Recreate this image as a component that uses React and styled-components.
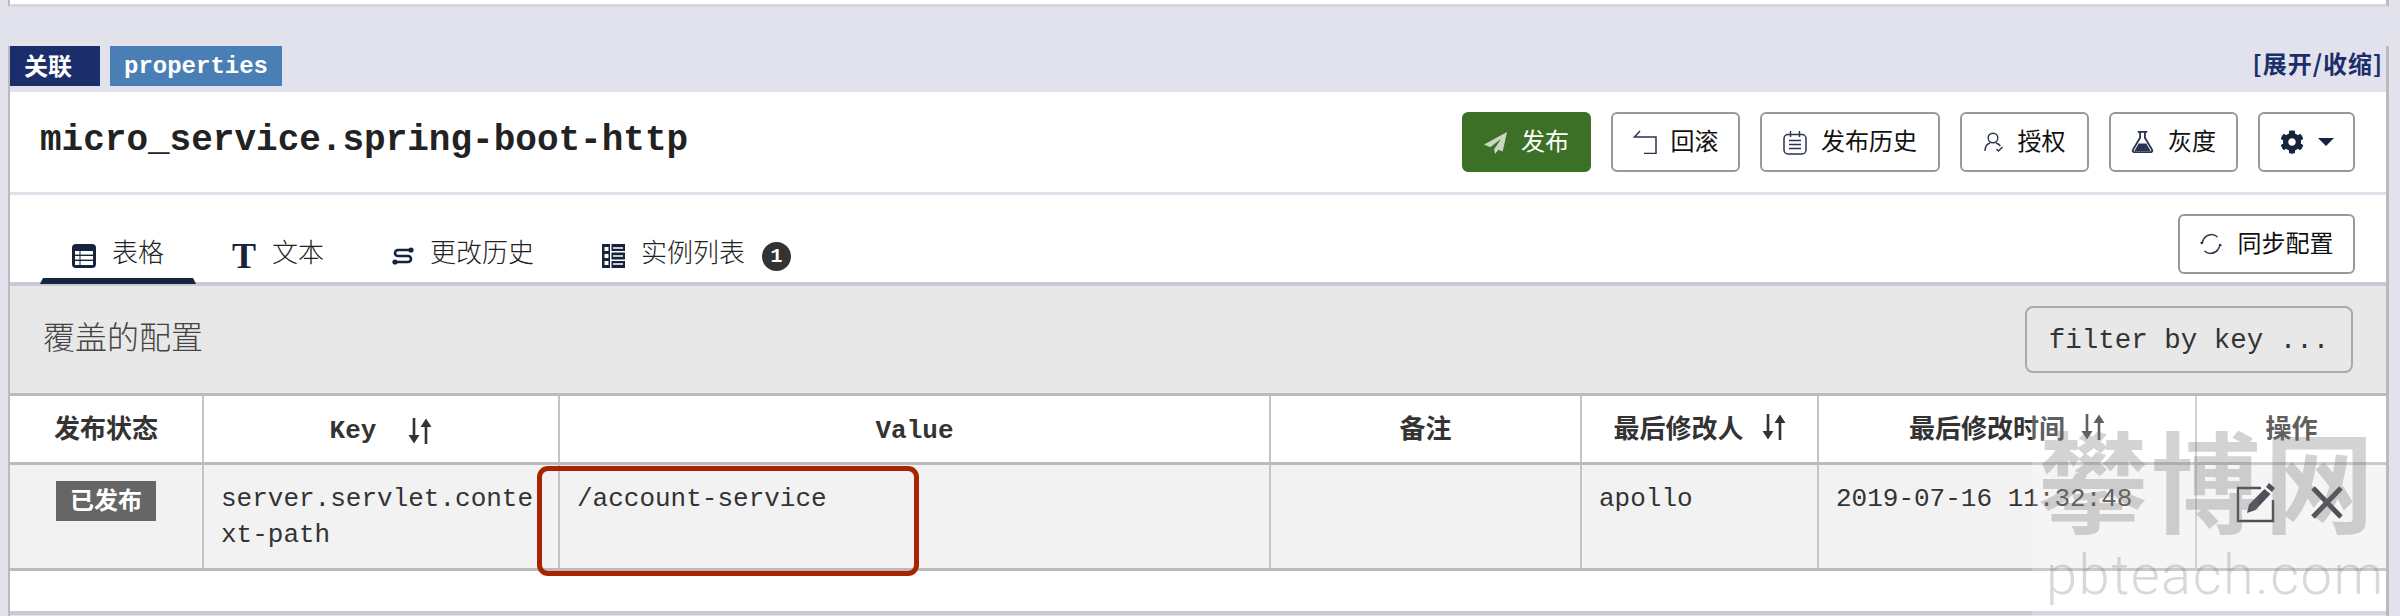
import React from "react";
import styled, { createGlobalStyle } from "styled-components";
import { FaCog } from "react-icons/fa";

const CJK = `"Noto Sans CJK SC", "Liberation Sans", sans-serif`;
const MONO = `"Liberation Mono", "Noto Sans CJK SC", monospace`;
const DARK = "#15233c";
const LINE = "#2a3350";

const GlobalStyle = createGlobalStyle`
  html, body {
    margin: 0;
    padding: 0;
    height: 616px;
    overflow: hidden;
    background: #e1e2ec;
    font-family: ${CJK};
  }
  * { box-sizing: border-box; }
`;

const TableIcon = () => (
  <svg width="24" height="24" viewBox="0 0 24 24">
    <rect width="24" height="24" rx="4" fill={DARK} />
    <rect x="3" y="7" width="18" height="3.6" fill="#fff" />
    <rect x="3" y="12" width="18" height="3.6" fill="#fff" />
    <rect x="3" y="17" width="18" height="4" fill="#fff" />
    <rect x="7.5" y="7" width="1" height="14" fill={DARK} />
  </svg>
);

const HistoryIcon = () => (
  <svg width="22" height="18" viewBox="0 0 22 18">
    <path d="M19 3H6a3 3 0 0 0 0 6h10a3 3 0 0 1 0 6H3" fill="none" stroke={DARK} strokeWidth="2.6" />
    <circle cx="19" cy="3" r="2.6" fill={DARK} />
    <circle cx="3" cy="15" r="2.6" fill={DARK} />
  </svg>
);

const InstanceIcon = () => (
  <svg width="23" height="24" viewBox="0 0 23 24">
    <rect width="23" height="24" fill={DARK} />
    <rect x="2.5" y="3" width="4" height="4" fill="#fff" />
    <rect x="2.5" y="10" width="4" height="4" fill="#fff" />
    <rect x="2.5" y="17" width="4" height="4" fill="#fff" />
    <rect x="8" y="0" width="1.5" height="24" fill="#fff" />
    <rect x="11" y="3" width="10" height="2" fill="#c6cad2" />
    <rect x="11" y="11" width="10" height="2" fill="#c6cad2" />
    <rect x="11" y="19" width="10" height="2" fill="#c6cad2" />
    <rect x="9" y="7" width="14" height="1.5" fill="#fff" />
    <rect x="9" y="15.5" width="14" height="1.5" fill="#fff" />
  </svg>
);

const PlaneIcon = () => (
  <svg width="23" height="23" viewBox="0 0 24 24">
    <path d="M24 1L0 14l6.500 3L18 8 10.500 19l1 5 3.500-4.500 4.500 2z" fill="#fff" fillOpacity="0.72" />
  </svg>
);

const ReturnIcon = () => (
  <svg width="24" height="24" viewBox="0 0 24 24">
    <path d="M7 1L1.500 7H23v16.500H11" fill="none" stroke={LINE} strokeWidth="1.5" />
  </svg>
);

const NoteIcon = () => (
  <svg width="24" height="25" viewBox="0 0 24 25">
    <rect x="1" y="4.5" width="22" height="19.5" rx="4" fill="none" stroke={LINE} strokeWidth="1.5" />
    <path d="M7.500 1v6M16.500 1v6M6 10.500h12M6 14.500h12M6 18.500h12" stroke={LINE} strokeWidth="1.4" />
  </svg>
);

const UserIcon = () => (
  <svg width="20" height="20" viewBox="0 0 20 20">
    <circle cx="9" cy="6" r="4.8" fill="none" stroke={LINE} strokeWidth="1.4" />
    <path d="M1 19c0-4 2-7 5-8M12 11c2 .6 3.500 1.700 4.400 3.200M12.500 17l2 2 4-4" fill="none" stroke={LINE} strokeWidth="1.4" />
  </svg>
);

const FlaskIcon = () => (
  <svg width="23" height="22" viewBox="0 0 24 23">
    <path d="M7 1h10M9.500 1v6L2 19.500A1.600 1.600 0 0 0 3.400 22h17.200a1.600 1.600 0 0 0 1.400-2.500L14.500 7V1" fill="none" stroke={LINE} strokeWidth="1.9" />
    <path d="M8 13h8l4.500 8h-17z" fill={LINE} />
  </svg>
);

const SyncIcon = () => (
  <svg width="22" height="22" viewBox="0 0 22 22">
    <path d="M4 5.500A9 9 0 0 1 17.500 4M18 16.500A9 9 0 0 1 4.500 18" fill="none" stroke={LINE} strokeWidth="1.5" />
    <path d="M3 9l-1.500 2.500L0 9zM19 13l1.500-2.500L22 13z" fill={LINE} />
    <path d="M2.200 11A9 9 0 0 1 4 5.500M19.800 11A9 9 0 0 1 18 16.500" fill="none" stroke={LINE} strokeWidth="1.5" />
  </svg>
);

const SortIcon = () => (
  <svg width="24" height="26" viewBox="0 0 24 26">
    <path d="M6 0v20M18 26V6" stroke="#333" strokeWidth="2.6" />
    <path d="M0.500 17h11L6 25.500zM12.500 9h11L18 .5z" fill="#333" />
  </svg>
);

const EditIcon = () => (
  <svg width="40" height="40" viewBox="0 0 40 40">
    <path d="M25 5H2v33h35V17" fill="none" stroke="#1d212c" strokeWidth="2.4" />
    <path d="M33 0l6 5-3 4-6-5zM28.500 6l6 5-15 16-8.500 3 2-8.500z" fill="#1d212c" />
  </svg>
);

const CloseIcon = () => (
  <svg width="32" height="33" viewBox="0 0 32 33">
    <path d="M2 2l28 29M30 2L2 31" stroke="#1d212c" strokeWidth="5" />
  </svg>
);

const App = () => {
  const actions = [
    { label: "回滚", icon: <ReturnIcon />, width: 129 },
    { label: "发布历史", icon: <NoteIcon />, width: 180 },
    { label: "授权", icon: <UserIcon />, width: 129 },
    { label: "灰度", icon: <FlaskIcon />, width: 129 },
  ];

  const tabs = [
    { label: "表格", icon: <TableIcon />, active: true },
    { label: "文本", icon: <SerifT>T</SerifT> },
    { label: "更改历史", icon: <HistoryIcon /> },
    { label: "实例列表", icon: <InstanceIcon />, count: 1 },
  ];

  return (
    <>
      <GlobalStyle />
      <Page>
        <PrevPanel />
        <Section>
          <SectionTop>
            <Labels>
              <Label $color="#1c2d6b" $width={90}>关联</Label>
              <Label $color="#4a7fb5" $width={172} $mono>properties</Label>
            </Labels>
            <Toggle>[展开/收缩]</Toggle>
          </SectionTop>
          <Panel>
            <PanelHead>
              <Title>micro_service.spring-boot-http</Title>
              <Toolbar>
                <Button $width={129} $primary>
                  <PlaneIcon />
                  <ButtonText>发布</ButtonText>
                </Button>
                {actions.map((a) => (
                  <Button key={a.label} $width={a.width}>
                    {a.icon}
                    <ButtonText>{a.label}</ButtonText>
                  </Button>
                ))}
                <Button $width={97}>
                  <FaCog size={24} color={DARK} />
                  <Caret />
                </Button>
              </Toolbar>
            </PanelHead>
            <TabBar>
              <TabList>
                {tabs.map((t) => (
                  <Tab key={t.label} $active={t.active}>
                    {t.icon}
                    <TabText>{t.label}</TabText>
                    {t.count && <Count>{t.count}</Count>}
                  </Tab>
                ))}
              </TabList>
              <SyncButton>
                <SyncIcon />
                <ButtonText>同步配置</ButtonText>
              </SyncButton>
            </TabBar>
            <Heading>
              <HeadingTitle>覆盖的配置</HeadingTitle>
              <FilterButton>filter by key ...</FilterButton>
            </Heading>
            <Table>
              <thead>
                <tr>
                  <Th $width={193}>发布状态</Th>
                  <Th $width={356}>
                    <HeadInner $gap={32}>
                      <MonoHead>Key</MonoHead>
                      <SortIcon />
                    </HeadInner>
                  </Th>
                  <Th $width={711}>
                    <MonoHead>Value</MonoHead>
                  </Th>
                  <Th $width={311}>备注</Th>
                  <Th $width={237}>
                    <HeadInner $gap={18}>
                      最后修改人
                      <SortIcon />
                    </HeadInner>
                  </Th>
                  <Th $width={378}>
                    <HeadInner $gap={16}>
                      最后修改时间
                      <SortIcon />
                    </HeadInner>
                  </Th>
                  <Th>操作</Th>
                </tr>
              </thead>
              <tbody>
                <tr>
                  <Td $center>
                    <Status>已发布</Status>
                  </Td>
                  <Td>server.servlet.context-path</Td>
                  <Td>/account-service</Td>
                  <Td />
                  <Td>apollo</Td>
                  <Td>2019-07-16 11:32:48</Td>
                  <Td $center>
                    <Ops>
                      <EditIcon />
                      <CloseIcon />
                    </Ops>
                  </Td>
                </tr>
              </tbody>
            </Table>
            <Spacer />
          </Panel>
          <Highlight />
        </Section>
        <Watermark>
          <MarkName>攀博网</MarkName>
          <MarkSite>pbteach.com</MarkSite>
        </Watermark>
      </Page>
    </>
  );
};

const Page = styled.div`
  position: relative;
  width: 2400px;
  height: 616px;
  overflow: hidden;
  padding: 0 11px 0 8px;
`;

const PrevPanel = styled.div`
  height: 7px;
  background: #fff;
  border-left: 2px solid #bbb;
  border-right: 3px solid #bbb;
  border-bottom: 3px solid #d5d6e0;
`;

const Section = styled.section`
  position: relative;
  margin-top: 39px;
  border-left: 2px solid #bbb;
  border-right: 3px solid #bbb;
  height: 570px;
`;

const SectionTop = styled.div`
  display: flex;
  justify-content: space-between;
  align-items: center;
  height: 46px;
`;

const Labels = styled.div`
  display: flex;
  gap: 10px;
  height: 40px;
  align-self: flex-start;
`;

const Label = styled.span`
  display: flex;
  align-items: center;
  width: ${(p) => p.$width}px;
  padding: 0 0 ${(p) => (p.$mono ? 0 : 4)}px 14px;
  background: ${(p) => p.$color};
  color: #fff;
  font-weight: 700;
  font-size: 24px;
  font-family: ${(p) => (p.$mono ? MONO : CJK)};
`;

const Toggle = styled.a`
  margin-right: 3px;
  margin-top: -14px;
  color: #1c2d6b;
  font-size: 24px;
  letter-spacing: 1px;
  font-weight: 700;
`;

const Panel = styled.div`
  background: #fff;
`;

const PanelHead = styled.div`
  display: flex;
  justify-content: space-between;
  align-items: center;
  height: 103px;
  padding: 0 31px 0 30px;
  border-bottom: 3px solid #e0e2ec;
`;

const Title = styled.h2`
  margin: 0 0 4px;
  font-family: ${MONO};
  font-size: 36px;
  font-weight: 700;
  color: #222;
`;

const Toolbar = styled.div`
  display: flex;
  gap: 20px;
`;

const Button = styled.button`
  display: flex;
  align-items: center;
  justify-content: center;
  gap: 14px;
  width: ${(p) => p.$width}px;
  height: 60px;
  padding: 0;
  border-radius: 6px;
  border: 2px solid ${(p) => (p.$primary ? "#3d7027" : "#999")};
  background: ${(p) => (p.$primary ? "#3d7027" : "#fff")};
  color: ${(p) => (p.$primary ? "#fff" : "#111")};
  font-family: ${CJK};
  font-size: 24px;
`;

const ButtonText = styled.span`
  margin-bottom: 5px;
`;

const Caret = styled.span`
  width: 0;
  height: 0;
  border-left: 8px solid transparent;
  border-right: 8px solid transparent;
  border-top: 8px solid ${DARK};
`;

const TabBar = styled.div`
  display: flex;
  justify-content: space-between;
  height: 91px;
  padding: 19px 31px 0 30px;
  border-bottom: 4px solid #c9cad5;
`;

const TabList = styled.div`
  display: flex;
  gap: 4px;
  align-items: flex-end;
`;

const Tab = styled.div`
  position: relative;
  display: flex;
  align-items: center;
  gap: 16px;
  height: 60px;
  padding: 4px 32px 0;
  margin-bottom: -2px;
  font-size: 26px;
  font-weight: 300;
  color: #222;
  &::after {
    content: "";
    display: ${(p) => (p.$active ? "block" : "none")};
    position: absolute;
    left: 0;
    right: 0;
    bottom: 0;
    height: 6px;
    background: #14263f;
    clip-path: polygon(3px 0, calc(100% - 3px) 0, 100% 100%, 0 100%);
  }
`;

const TabText = styled.span`
  margin-bottom: 12px;
`;

const SerifT = styled.span`
  width: 24px;
  text-align: center;
  font-family: "Liberation Serif", serif;
  font-weight: 700;
  font-size: 36px;
  line-height: 1;
  color: ${DARK};
`;

const Count = styled.span`
  display: flex;
  align-items: center;
  justify-content: center;
  width: 29px;
  height: 29px;
  margin-left: 1px;
  border-radius: 50%;
  background: #333;
  color: #fff;
  font-family: ${MONO};
  font-size: 20px;
  font-weight: 700;
`;

const SyncButton = styled(Button)`
  width: 177px;
  height: 60px;
  gap: 16px;
`;

const Heading = styled.div`
  display: flex;
  justify-content: space-between;
  align-items: center;
  height: 110px;
  padding: 0 33px;
  background: #e8e8e8;
  border-bottom: 3px solid #bbb;
`;

const HeadingTitle = styled.span`
  margin-bottom: 10px;
  font-size: 32px;
  font-weight: 300;
  color: #444;
`;

const FilterButton = styled.div`
  display: flex;
  align-items: center;
  justify-content: center;
  width: 328px;
  height: 67px;
  padding-top: 2px;
  border: 2px solid #aaa;
  border-radius: 8px;
  font-family: ${MONO};
  font-size: 27.5px;
  color: #333;
`;

const Table = styled.table`
  width: 100%;
  table-layout: fixed;
  border-collapse: collapse;
`;

const Th = styled.th`
  width: ${(p) => (p.$width ? `${p.$width}px` : "auto")};
  height: 67px;
  padding: 0 0 4px;
  background: #fff;
  border-right: 2px solid #c4c4c4;
  border-bottom: 3px solid #bbb;
  font-size: 26px;
  font-weight: 700;
  color: #333;
  text-align: center;
  &:last-child {
    border-right: 0;
  }
`;

const HeadInner = styled.span`
  display: inline-flex;
  align-items: center;
  gap: ${(p) => p.$gap}px;
`;

const MonoHead = styled.span`
  font-family: ${MONO};
`;

const Td = styled.td`
  height: 106px;
  padding: 16px 17px 0;
  vertical-align: top;
  background: #f2f2f2;
  border-right: 2px solid #c4c4c4;
  border-bottom: 3px solid #bbb;
  font-family: ${MONO};
  font-size: 26px;
  line-height: 36px;
  color: #333;
  word-break: break-all;
  text-align: ${(p) => (p.$center ? "center" : "left")};
  &:last-child {
    border-right: 0;
  }
`;

const Status = styled.span`
  display: inline-block;
  width: 100px;
  height: 40px;
  background: #666;
  color: #fff;
  font-family: ${CJK};
  font-size: 24px;
  font-weight: 700;
  line-height: 36px;
`;

const Ops = styled.div`
  display: flex;
  align-items: center;
  justify-content: flex-end;
  gap: 35px;
  margin: 2px 26px 0 0;
`;

const Spacer = styled.div`
  height: 44px;
  border-bottom: 4px solid #c9cad5;
`;

const Highlight = styled.div`
  position: absolute;
  left: 527px;
  top: 420px;
  width: 382px;
  height: 110px;
  border: 5px solid #a82400;
  border-radius: 11px;
`;

const Watermark = styled.div`
  position: absolute;
  left: 2032px;
  top: 396px;
  width: 354px;
  height: 220px;
  padding: 20px 8px 0 6px;
  background: rgba(255, 255, 255, 0.22);
  overflow: hidden;
`;

const MarkName = styled.div`
  font-size: 110px;
  line-height: 122px;
  letter-spacing: 3px;
  font-weight: 700;
  color: rgba(110, 110, 110, 0.3);
  white-space: nowrap;
`;

const MarkSite = styled.div`
  margin: 4px 0 0 8px;
  font-family: Roboto, sans-serif;
  font-weight: 300;
  font-size: 56px;
  line-height: 66px;
  letter-spacing: 1.5px;
  white-space: nowrap;
  color: rgba(130, 130, 130, 0.3);
`;

export default App;
